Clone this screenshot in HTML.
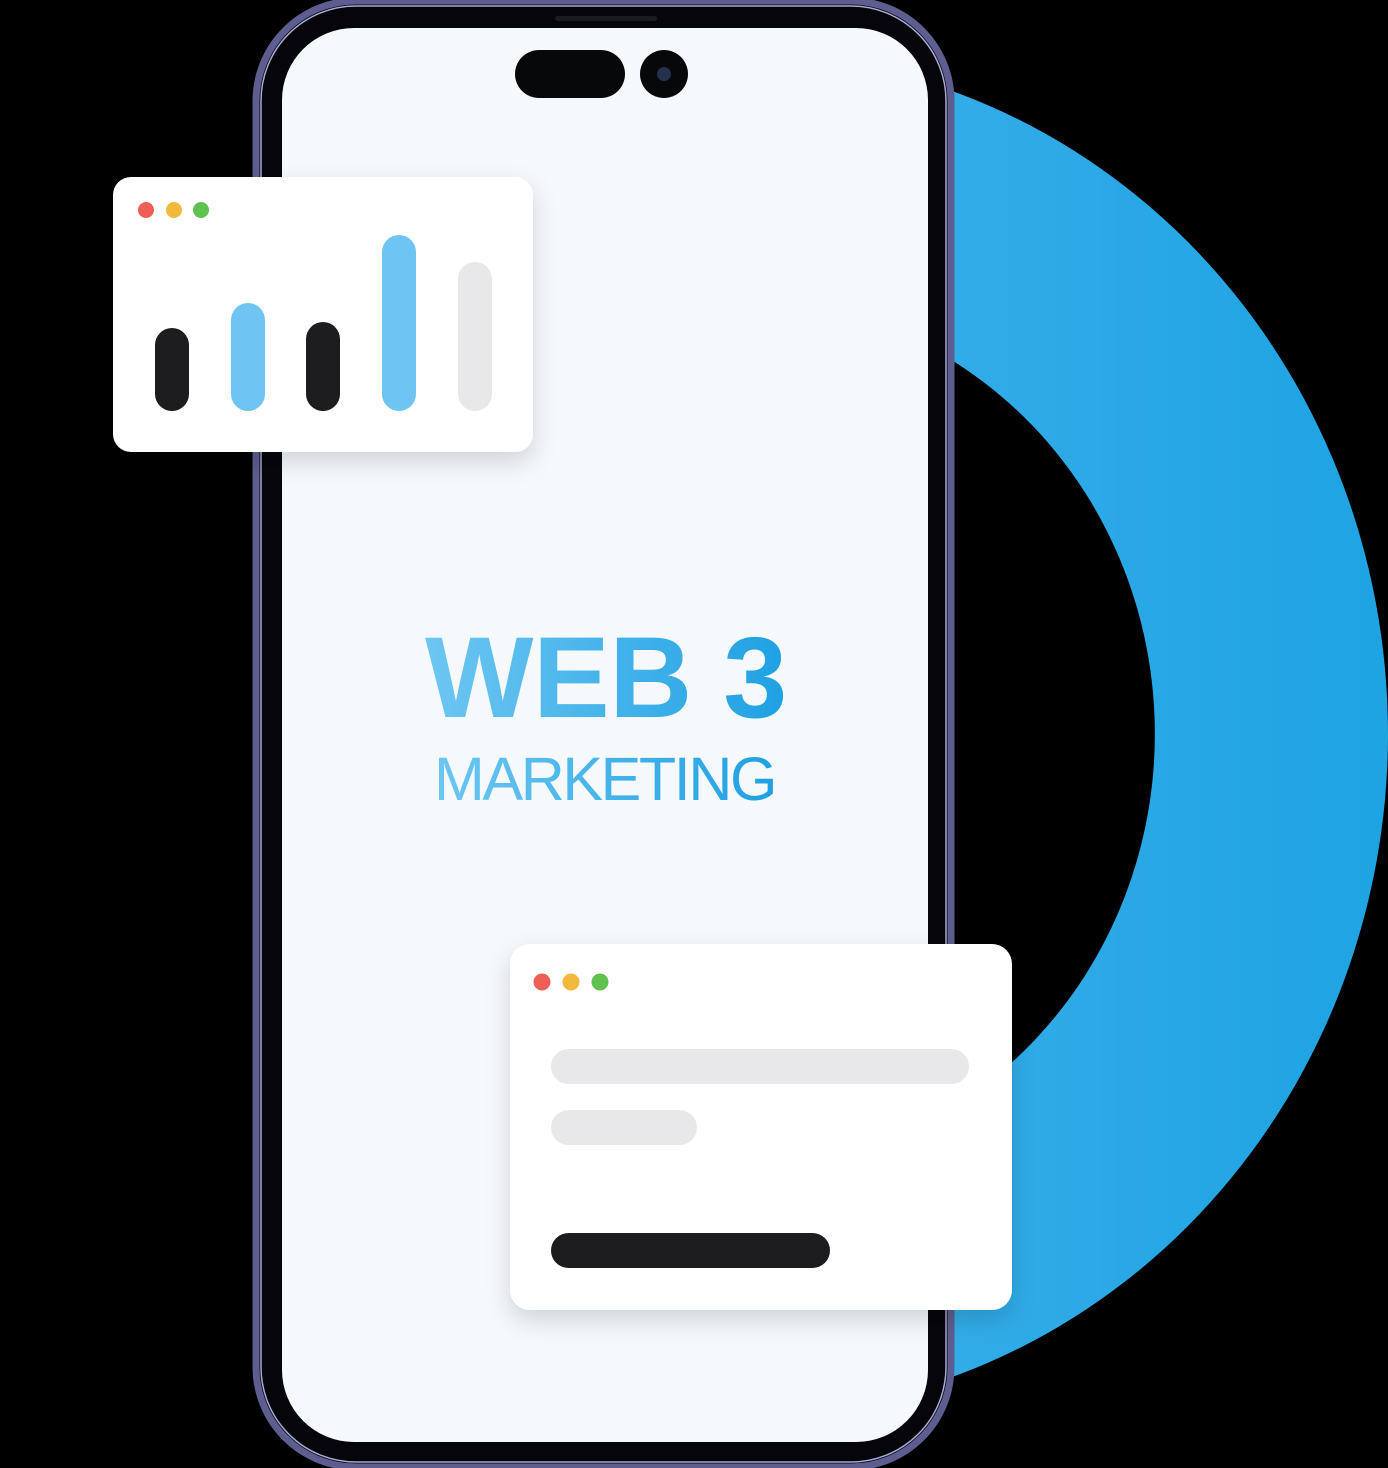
<!DOCTYPE html>
<html><head><style>html,body{margin:0;padding:0;background:#000;width:1388px;height:1468px;overflow:hidden}</style></head>
<body>
<svg width="1388" height="1468" viewBox="0 0 1388 1468" xmlns="http://www.w3.org/2000/svg">
<defs>
<linearGradient id="ring" x1="0" y1="0" x2="1" y2="0"><stop offset="0" stop-color="#3cb0ea"/><stop offset="1" stop-color="#1ea3e3"/></linearGradient>
<linearGradient id="txt" x1="0" y1="0" x2="1" y2="0"><stop offset="0" stop-color="#6dc6f2"/><stop offset="1" stop-color="#1fa1e3"/></linearGradient>
<filter id="sh" x="-20%" y="-20%" width="140%" height="150%"><feDropShadow dx="0" dy="10" stdDeviation="12" flood-color="#000" flood-opacity="0.15"/></filter>
</defs>
<!-- ring -->
<path d="M742 54 A646 680 0 0 1 742 1414 L742 1168 A413 434 0 0 0 742 300 Z" fill="url(#ring)"/>
<!-- phone -->
<rect x="256" y="1" width="695" height="1466" rx="100" fill="#05050a" stroke="#5d5d8f" stroke-width="7"/>
<rect x="261" y="6" width="685" height="1456" rx="95" fill="none" stroke="#a9a9d6" stroke-width="1.5"/>
<rect x="555" y="16" width="102" height="5" rx="2.5" fill="#1a1a22"/>
<rect x="282" y="28" width="646" height="1414" rx="72" fill="#f5f9fc"/>
<rect x="515" y="50" width="110" height="48" rx="24" fill="#07080a"/>
<circle cx="664" cy="74" r="24" fill="#07080a"/>
<circle cx="664" cy="74" r="7" fill="#22324a"/>
<!-- text -->
<text x="425" y="717" font-family="Liberation Sans, sans-serif" font-weight="bold" font-size="115" letter-spacing="-0.5" fill="url(#txt)">WEB 3</text>
<text x="434" y="800" font-family="Liberation Sans, sans-serif" font-size="61" letter-spacing="-2.4" fill="url(#txt)">MARKETING</text>
<!-- card 1 -->
<rect x="113" y="177" width="420" height="275" rx="18" fill="#ffffff" filter="url(#sh)"/>
<circle cx="146" cy="210" r="8" fill="#ee6055"/>
<circle cx="174" cy="210" r="8" fill="#f3b93d"/>
<circle cx="201" cy="210" r="8" fill="#5ec24f"/>
<rect x="155" y="328" width="34" height="83" rx="17" fill="#1d1d20"/>
<rect x="231" y="303" width="34" height="108" rx="17" fill="#6fc5f1"/>
<rect x="306" y="322" width="34" height="89" rx="17" fill="#1d1d20"/>
<rect x="382" y="235" width="34" height="176" rx="17" fill="#6fc5f1"/>
<rect x="458" y="262" width="34" height="149" rx="17" fill="#e8e8ea"/>
<!-- card 2 -->
<rect x="510" y="944" width="502" height="366" rx="20" fill="#ffffff" filter="url(#sh)"/>
<circle cx="542" cy="982" r="8.5" fill="#ee6055"/>
<circle cx="571" cy="982" r="8.5" fill="#f3b93d"/>
<circle cx="600" cy="982" r="8.5" fill="#5ec24f"/>
<rect x="551" y="1049" width="418" height="35" rx="17.5" fill="#e8e8ea"/>
<rect x="551" y="1110" width="146" height="35" rx="17.5" fill="#e8e8ea"/>
<rect x="551" y="1233" width="279" height="35" rx="17.5" fill="#1d1d20"/>
</svg>
</body></html>
